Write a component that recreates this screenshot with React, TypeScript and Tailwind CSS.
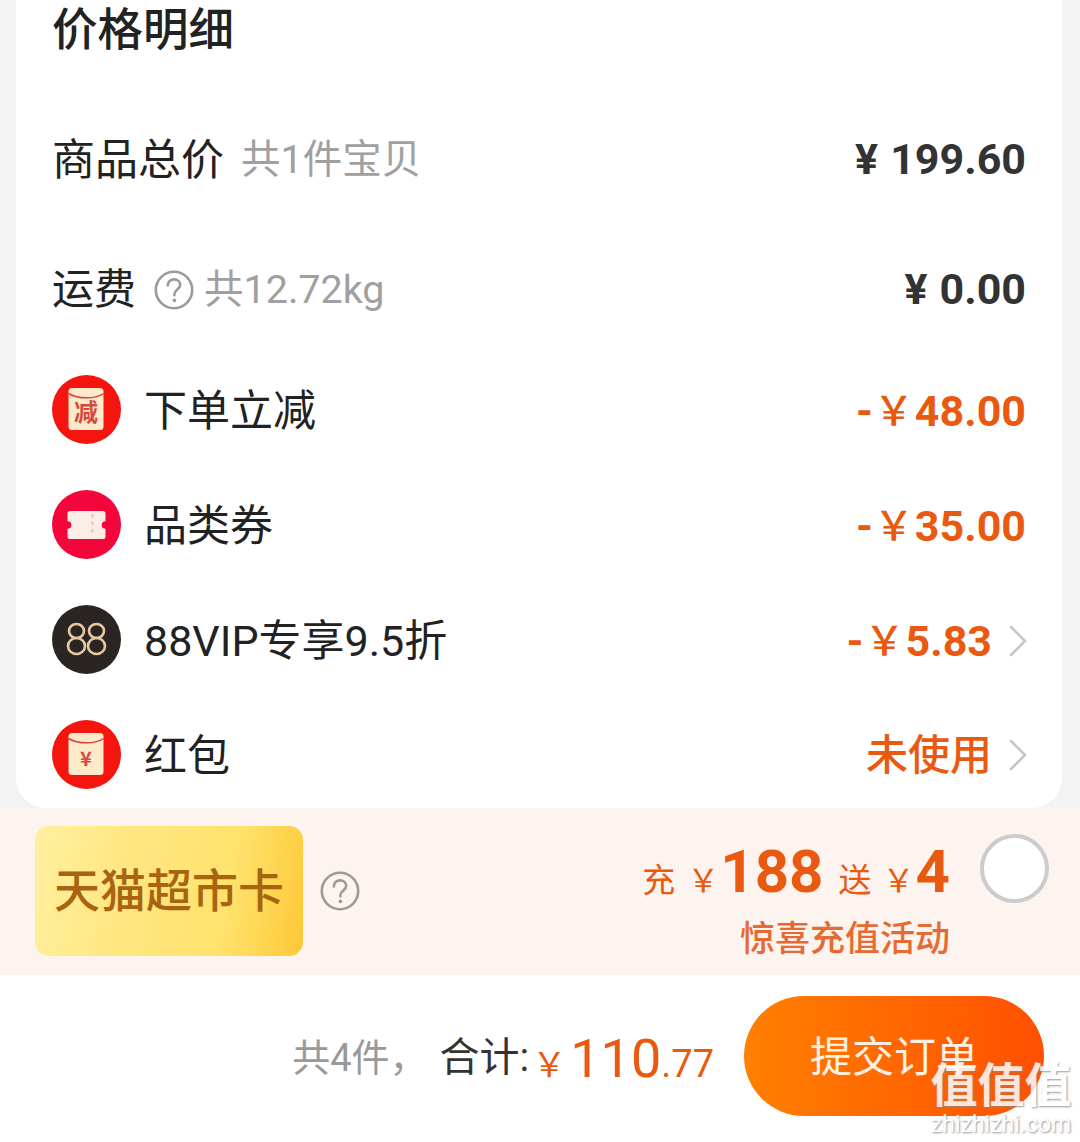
const orange = "text-[#e9590f]";
const cjk = "font-['Noto_Sans_CJK_SC',sans-serif]";

function Help({ size, className = "" }: { size: number; className?: string }) {
  return (
    <svg width={size} height={size} viewBox="0 0 40 40" className={className} fill="none">
      <circle cx="20" cy="20" r="18.2" stroke="#9a9a9a" strokeWidth="2.6" />
      <path d="M13.8 15.4c0-3.600 2.800-6 6.300-6 3.400 0 6.100 2.200 6.100 5.300 0 4.600-5.800 4.900-5.800 9.600v1" stroke="#9a9a9a" strokeWidth="2.600" strokeLinecap="round" />
      <circle cx="20.400" cy="30.400" r="1.800" fill="#9a9a9a" />
    </svg>
  );
}

function Chevron() {
  return (
    <svg width="20" height="32" viewBox="0 0 20 32" fill="none" className="mb-[2px] ml-[16px] mr-[-2px]">
      <path d="M3 2l14 14L3 30" stroke="#c6c6c6" strokeWidth="2.600" strokeLinecap="round" strokeLinejoin="round" />
    </svg>
  );
}

function Envelope({ glyph, size, y }: { glyph: string; size: number; y: number }) {
  return (
    <svg width="69" height="69" viewBox="0 0 69 69" className="mb-[4px]">
      <circle cx="34.500" cy="34.500" r="34.500" fill="#f5150f" />
      <rect x="16.500" y="13" width="35" height="42" rx="3.500" fill="#fdeacb" />
      <path d="M16.500 18.500c5 3 11 4.300 18 4.300s13-1.300 17-4.300" fill="none" stroke="#d9463a" strokeWidth="1.500" />
      <text x="34" y={y} textAnchor="middle" fontSize={size} fontWeight="700" fill="#d34a3e" fontFamily="'Noto Sans CJK SC', sans-serif">
        {glyph}
      </text>
    </svg>
  );
}

function TicketIcon() {
  return (
    <svg width="69" height="69" viewBox="0 0 69 69" className="mb-[4px]">
      <circle cx="34.500" cy="34.500" r="34.500" fill="#f3063a" />
      <path
        d="M18 21h33a2.500 2.500 0 0 1 2.500 2.500v7.700a3.800 3.800 0 0 0 0 7.600v7.700a2.500 2.500 0 0 1-2.500 2.500H18a2.500 2.500 0 0 1-2.500-2.500v-7.700a3.800 3.800 0 0 0 0-7.600v-7.700A2.500 2.500 0 0 1 18 21z"
        fill="#fbeee6"
      />
      <path d="M40.500 24v22" stroke="#efc4b8" strokeWidth="2.200" strokeDasharray="3.500 4" />
    </svg>
  );
}

function VipIcon() {
  return (
    <svg width="69" height="69" viewBox="0 0 69 69" fill="none" className="mb-[4px]">
      <circle cx="34.500" cy="34.500" r="34.500" fill="#2a2422" />
      <g stroke="#e6c9a2" strokeWidth="2.600">
        <ellipse cx="24.500" cy="26" rx="7.500" ry="7" />
        <ellipse cx="24.500" cy="41" rx="8.500" ry="8" />
        <ellipse cx="44.500" cy="26" rx="7.500" ry="7" />
        <ellipse cx="44.500" cy="41" rx="8.500" ry="8" />
      </g>
    </svg>
  );
}

function DarkPrice({ value }: { value: string }) {
  return (
    <span className="text-[43px] font-bold text-[#333333] leading-none">
      ¥<span className="ml-[12px]">{value}</span>
    </span>
  );
}

function Discount({ value }: { value: string }) {
  return (
    <span className={`flex items-center text-[43px] font-bold leading-none ${orange}`}>
      <span>-</span>
      <span className={`mb-[7px] ml-[1px] text-[40px] font-medium ${cjk}`}>￥</span>
      <span className="ml-[1px]">{value}</span>
    </span>
  );
}

function DiscountRow({ icon, label, right, last }: { icon: React.ReactNode; label: string; right: React.ReactNode; last?: boolean }) {
  return (
    <div className={`flex items-center justify-between ${last ? "h-[109px] pt-[5px]" : "h-[115px]"}`}>
      <div className="flex items-center">
        {icon}
        <span className="ml-[23px] text-[43px] text-[#222222] leading-none">{label}</span>
      </div>
      <div className="flex items-center">{right}</div>
    </div>
  );
}

export default function App() {
  return (
    <div className="relative h-[1142px] w-[1080px] overflow-hidden bg-white font-['Roboto','Noto_Sans_CJK_SC',sans-serif]">
      <div className="bg-[#f3f3f3] px-[16px] pr-[18px]">
        <div className="h-[808px] rounded-b-[30px] bg-white pl-[36px] pr-[36px]">
          <div className="flex h-[60px] items-center pt-[2px] text-[45.500px] font-medium text-[#222222] leading-none">价格明细</div>

          <div className="mt-[34px] flex h-[130px] items-center justify-between">
            <div className="mt-[2px] flex items-center leading-none">
              <span className="text-[43px] text-[#222222]">商品总价</span>
              <span className="ml-[17px] text-[39.500px] text-[#a0a0a0]">共1件宝贝</span>
            </div>
            <DarkPrice value="199.60" />
          </div>

          <div className="flex h-[130px] items-center justify-between">
            <div className="mt-[2px] flex items-center leading-none">
              <span className="text-[42px] text-[#222222]">运费</span>
              <Help size={40} className="ml-[18px]" />
              <span className="ml-[10px] text-[39.500px] text-[#a0a0a0]">共12.72kg</span>
            </div>
            <DarkPrice value="0.00" />
          </div>

          <DiscountRow icon={<Envelope glyph="减" size={24} y={46} />} label="下单立减" right={<Discount value="48.00" />} />
          <DiscountRow icon={<TicketIcon />} label="品类券" right={<Discount value="35.00" />} />
          <DiscountRow
            icon={<VipIcon />}
            label="88VIP专享9.5折"
            right={
              <>
                <Discount value="5.83" />
                <Chevron />
              </>
            }
          />
          <DiscountRow
            last
            icon={<Envelope glyph="¥" size={20} y={46} />}
            label="红包"
            right={
              <>
                <span className={`text-[42px] font-medium leading-none ${orange}`}>未使用</span>
                <Chevron />
              </>
            }
          />
        </div>
      </div>

      <div className="flex h-[167px] items-start bg-[#fdf3ef] pl-[35px] pr-[31px] pt-[18px]">
        <div className="flex h-[130px] w-[268px] items-center justify-center rounded-[14px] bg-[linear-gradient(100deg,#fff0a0_0%,#ffe680_35%,#ffe36e_70%,#fdc836_100%)] text-[46px] font-medium leading-none text-[#a8640f]">
          天猫超市卡
        </div>
        <Help size={40} className="ml-[17px] mt-[45px]" />

        <div className="ml-auto flex flex-col items-end">
          <div className={`flex h-[96px] items-baseline pt-[16px] ${orange}`}>
            <span className="text-[33px]">充</span>
            <span className={`ml-[12px] text-[32px] ${cjk}`}>￥</span>
            <span className="ml-[1px] text-[60px] font-bold leading-none">188</span>
            <span className="ml-[15px] text-[33px]">送</span>
            <span className={`ml-[11px] text-[32px] ${cjk}`}>￥</span>
            <span className="ml-[1px] text-[60px] font-bold leading-none">4</span>
          </div>
          <div className="text-[35px] font-medium leading-none text-[#e56a33]">惊喜充值活动</div>
        </div>
        <div className="ml-[30px] mt-[8px] h-[69px] w-[69px] rounded-full border-[4px] border-[#cccccc] bg-white" />
      </div>

      <div className="flex h-[167px] items-center justify-end bg-white pr-[36px] pb-[5px]">
        <span className="mt-[3px] text-[38px] text-[#999999] leading-none">共4件，</span>
        <span className="ml-[12px] mt-[3px] text-[40px] text-[#333333] leading-none">合计:</span>
        <div className={`ml-[3px] mt-[5px] flex items-baseline ${orange}`}>
          <span className={`text-[34px] leading-none ${cjk}`}>￥</span>
          <span className="ml-[4px] text-[54px] leading-none">110</span>
          <span className="text-[38px] leading-none">.77</span>
        </div>
        <div className="ml-[30px] flex h-[120px] w-[300px] items-center justify-center rounded-full bg-[linear-gradient(90deg,#ff8000_0%,#ff5000_100%)] pt-[4px] text-[42px] leading-none text-[#fff0e4]">
          提交订单
        </div>
      </div>

      <div className="pointer-events-none absolute right-[8px] top-[1059px] flex w-[142px] flex-col items-center text-white">
        <div className="text-[47px] font-bold leading-[54px] opacity-85 [text-shadow:1px_1px_2px_#8a8a8a]">值值值</div>
        <div className="mt-[-1px] text-[23px] leading-[26px] opacity-90 [text-shadow:1px_1px_2px_#8a8a8a]">zhizhizhi.com</div>
      </div>
    </div>
  );
}
